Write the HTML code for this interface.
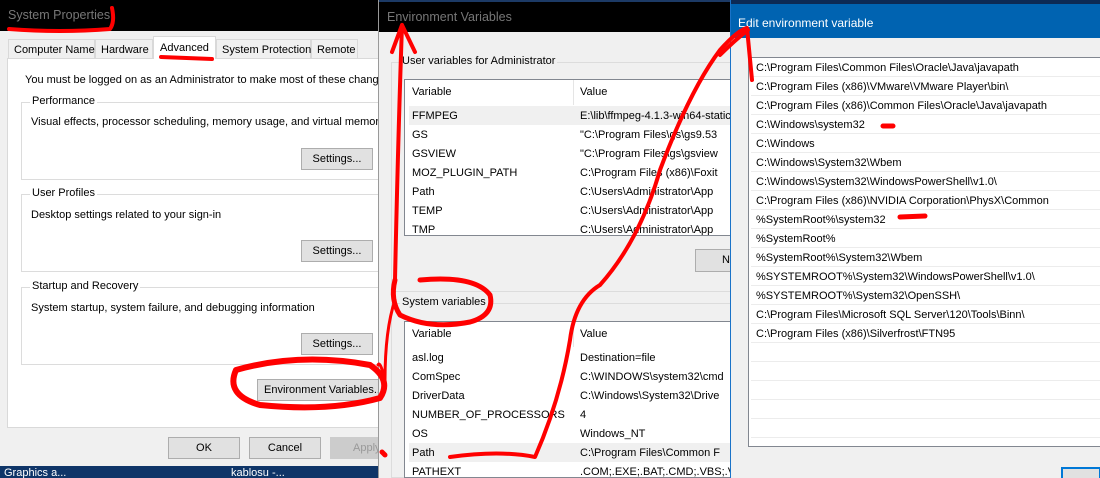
<!DOCTYPE html>
<html><head><meta charset="utf-8"><style>
*{box-sizing:border-box;margin:0;padding:0}
html,body{width:1100px;height:478px;overflow:hidden}
body{position:relative;background:#f0f0f0;font-family:"Liberation Sans",sans-serif;font-size:11px;color:#000}
.a{position:absolute;white-space:nowrap}
.btn{position:absolute;background:#e1e1e1;border:1px solid #adadad;text-align:center;line-height:20px;white-space:nowrap;overflow:hidden}
.grp{position:absolute;border:1px solid #dcdcdc}
.gl{position:absolute;top:-8px;left:8px;background:#fff;padding:0 2px;white-space:nowrap}
.lb{position:absolute;background:#fff;border:1px solid #828790;overflow:hidden}
.row{position:absolute;left:0;right:0;height:19px;line-height:20px}
.win{position:absolute;overflow:hidden}
</style></head><body>
<!-- System properties -->
<div class="win" style="left:0;top:0;width:378px;height:478px">
<div class="a" style="left:0;top:0;width:378px;height:31px;background:#000"></div>
<div class="a" style="left:8px;top:8px;color:#777;font-size:12.5px">System Properties</div>
<div class="a" style="left:7px;top:58px;width:380px;height:370px;background:#fff;border:1px solid #d9d9d9"></div>
<div class="a" style="left:8px;top:39px;width:87px;height:20px;border:1px solid #d9d9d9;background:#f0f0f0;padding:4px 5px">Computer Name</div>
<div class="a" style="left:95px;top:39px;width:58px;height:20px;border:1px solid #d9d9d9;background:#f0f0f0;padding:4px 5px">Hardware</div>
<div class="a" style="left:153px;top:36px;width:63px;height:23px;border:1px solid #d9d9d9;border-bottom:none;background:#fff;padding:5px 6px">Advanced</div>
<div class="a" style="left:216px;top:39px;width:95px;height:20px;border:1px solid #d9d9d9;background:#f0f0f0;padding:4px 5px">System Protection</div>
<div class="a" style="left:311px;top:39px;width:47px;height:20px;border:1px solid #d9d9d9;background:#f0f0f0;padding:4px 5px">Remote</div>
<div class="a" style="left:25px;top:74px">You must be logged on as an Administrator to make most of these changes.</div>
<div class="grp" style="left:21px;top:102px;width:370px;height:78px"><span class="gl">Performance</span></div>
<div class="a" style="left:31px;top:116px">Visual effects, processor scheduling, memory usage, and virtual memory</div>
<div class="btn" style="left:301px;top:148px;width:72px;height:22px">Settings...</div>
<div class="grp" style="left:21px;top:194px;width:370px;height:78px"><span class="gl">User Profiles</span></div>
<div class="a" style="left:31px;top:209px">Desktop settings related to your sign-in</div>
<div class="btn" style="left:301px;top:240px;width:72px;height:22px">Settings...</div>
<div class="grp" style="left:21px;top:287px;width:370px;height:78px"><span class="gl">Startup and Recovery</span></div>
<div class="a" style="left:31px;top:302px">System startup, system failure, and debugging information</div>
<div class="btn" style="left:301px;top:333px;width:72px;height:22px">Settings...</div>
<div class="btn" style="left:257px;top:379px;width:124px;height:22px;text-align:left;padding-left:6px">Environment Variables...</div>
<div class="btn" style="left:168px;top:437px;width:72px;height:22px">OK</div>
<div class="btn" style="left:249px;top:437px;width:72px;height:22px">Cancel</div>
<div class="btn" style="left:330px;top:437px;width:72px;height:22px;color:#999;border-color:#ccc;background:#ccc;text-align:left;padding-left:22px">Apply</div>
<div class="a" style="left:0;top:466px;width:378px;height:12px;background:#0f3568;color:#fff;line-height:15px"><span style="margin-left:4px">Graphics a...</span><span style="position:absolute;left:231px">kablosu -...</span></div>
</div>
<!-- Env vars -->
<div class="win" style="left:378px;top:0;width:352px;height:478px;background:#f0f0f0;border-left:1px solid #999">
<div class="a" style="left:0;top:0;width:352px;height:32px;background:#000;border-top:2px solid #1c3a66"></div>
<div class="a" style="left:8px;top:10px;color:#777;font-size:12.5px">Environment Variables</div>
<div class="grp" style="left:12px;top:62px;width:360px;height:230px"><span class="gl" style="background:#f0f0f0">User variables for Administrator</span></div>
<div class="lb" style="left:25px;top:79px;width:340px;height:157px">
<div class="row" style="top:0;height:25px;line-height:25px"><span class="a" style="left:7px">Variable</span><span class="a" style="left:168px;top:0;width:1px;height:25px;background:#e5e5e5"></span><span class="a" style="left:175px">Value</span></div>
<div class="row" style="top:26px;background:#f0f0f0;left:4px"><span class="a" style="left:3px">FFMPEG</span><span class="a" style="left:171px">E:\lib\ffmpeg-4.1.3-win64-static</span></div>
<div class="row" style="top:45px"><span class="a" style="left:7px">GS</span><span class="a" style="left:175px">"C:\Program Files\gs\gs9.53</span></div>
<div class="row" style="top:64px"><span class="a" style="left:7px">GSVIEW</span><span class="a" style="left:175px">"C:\Program Files\gs\gsview</span></div>
<div class="row" style="top:83px"><span class="a" style="left:7px">MOZ_PLUGIN_PATH</span><span class="a" style="left:175px">C:\Program Files (x86)\Foxit</span></div>
<div class="row" style="top:102px"><span class="a" style="left:7px">Path</span><span class="a" style="left:175px">C:\Users\Administrator\App</span></div>
<div class="row" style="top:121px"><span class="a" style="left:7px">TEMP</span><span class="a" style="left:175px">C:\Users\Administrator\App</span></div>
<div class="row" style="top:140px"><span class="a" style="left:7px">TMP</span><span class="a" style="left:175px">C:\Users\Administrator\App</span></div>
</div>
<div class="btn" style="left:316px;top:249px;width:60px;height:23px;text-align:left;padding-left:26px">N</div>
<div class="grp" style="left:12px;top:303px;width:360px;height:175px"><span class="gl" style="background:#f0f0f0">System variables</span></div>
<div class="lb" style="left:25px;top:321px;width:340px;height:157px">
<div class="row" style="top:0;height:25px;line-height:25px"><span class="a" style="left:7px">Variable</span><span class="a" style="left:168px;top:0;width:1px;height:25px;background:#e5e5e5"></span><span class="a" style="left:175px">Value</span></div>
<div class="row" style="top:26px"><span class="a" style="left:7px">asl.log</span><span class="a" style="left:175px">Destination=file</span></div>
<div class="row" style="top:45px"><span class="a" style="left:7px">ComSpec</span><span class="a" style="left:175px">C:\WINDOWS\system32\cmd</span></div>
<div class="row" style="top:64px"><span class="a" style="left:7px">DriverData</span><span class="a" style="left:175px">C:\Windows\System32\Drive</span></div>
<div class="row" style="top:83px"><span class="a" style="left:7px">NUMBER_OF_PROCESSORS</span><span class="a" style="left:175px">4</span></div>
<div class="row" style="top:102px"><span class="a" style="left:7px">OS</span><span class="a" style="left:175px">Windows_NT</span></div>
<div class="row" style="top:121px;background:#f0f0f0;left:4px"><span class="a" style="left:3px">Path</span><span class="a" style="left:171px">C:\Program Files\Common F</span></div>
<div class="row" style="top:140px;height:16px"><span class="a" style="left:7px">PATHEXT</span><span class="a" style="left:175px">.COM;.EXE;.BAT;.CMD;.VBS;.V</span></div>
</div>
</div>
<!-- Edit window -->
<div class="win" style="left:730px;top:0;width:370px;height:478px;background:#f0f0f0;border-left:1px solid #1a73c8">
<div class="a" style="left:0;top:0;width:370px;height:4px;background:#0c2a55"></div>
<div class="a" style="left:0;top:4px;width:370px;height:34px;background:#0063b1"></div>
<div class="a" style="left:7px;top:16px;color:#fff;font-size:12px">Edit environment variable</div>
<div class="lb" style="left:17px;top:57px;width:360px;height:390px">
<div style="position:absolute;left:2px;right:0;top:0;bottom:0;background:repeating-linear-gradient(#fff 0,#fff 18px,#ececec 18px,#ececec 19px)"></div>
<div class="a" style="left:7px;top:1px;line-height:19px">C:\Program Files\Common Files\Oracle\Java\javapath<br>C:\Program Files (x86)\VMware\VMware Player\bin\<br>C:\Program Files (x86)\Common Files\Oracle\Java\javapath<br>C:\Windows\system32<br>C:\Windows<br>C:\Windows\System32\Wbem<br>C:\Windows\System32\WindowsPowerShell\v1.0\<br>C:\Program Files (x86)\NVIDIA Corporation\PhysX\Common<br>%SystemRoot%\system32<br>%SystemRoot%<br>%SystemRoot%\System32\Wbem<br>%SYSTEMROOT%\System32\WindowsPowerShell\v1.0\<br>%SYSTEMROOT%\System32\OpenSSH\<br>C:\Program Files\Microsoft SQL Server\120\Tools\Binn\<br>C:\Program Files (x86)\Silverfrost\FTN95</div>
</div>
<div class="a" style="left:330px;top:467px;width:40px;height:11px;border:2px solid #0078d7;border-bottom:none;background:#e1e1e1"></div>
</div>
<!-- annotations -->
<svg class="a" style="left:0;top:0" width="1100" height="478" fill="none" stroke="#f00" stroke-linecap="round" stroke-linejoin="round">
<path d="M9 29 Q60 33 110 29 Q115 22 112 8" stroke-width="4"/>
<path d="M161 57 Q185 58 212 59" stroke-width="4"/>
<path d="M402 25 L392 52 M402 25 L415 52 M402 25 Q398 140 395 280" stroke-width="4"/>
<path d="M395 280 Q390 300 400 315 Q430 330 470 322 Q495 315 490 295 Q475 275 420 280" stroke-width="5"/>
<path d="M395 300 Q385 330 385 380 Q380 360 378 365" stroke-width="3"/>
<path d="M236 370 Q300 352 370 365 Q392 380 380 398 Q330 412 260 405 Q225 395 236 370" stroke-width="6"/>
<path d="M450 457 Q500 450 535 457 Q560 400 570 340 Q575 300 600 285 Q640 240 660 170 Q690 90 720 50 Q738 30 747 28 L752 80" stroke-width="4"/>
<path d="M720 55 Q735 40 748 30" stroke-width="4"/>
<path d="M883 126 L893 126 M900 217 L925 216" stroke-width="5"/>
<path d="M382 452 L385 455" stroke-width="5"/>
</svg>
</body></html>
